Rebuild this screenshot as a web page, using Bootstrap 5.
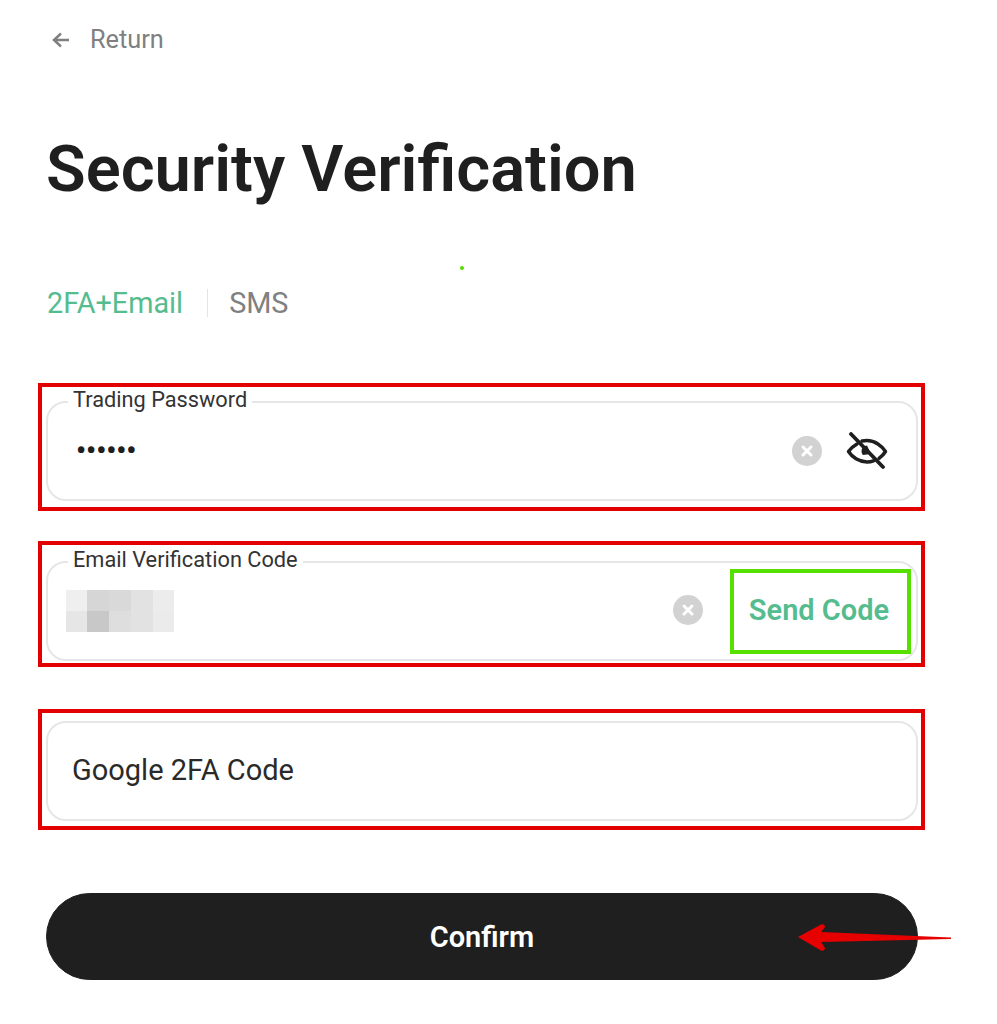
<!DOCTYPE html>
<html lang="en">

<head>
  <meta charset="UTF-8" />
  <meta name="viewport" content="width=device-width, initial-scale=1" />
  <title>Security Verification</title>
  <link href="https://cdn.jsdelivr.net/npm/bootstrap@5.3.3/dist/css/bootstrap.min.css" rel="stylesheet" />
  <style>
    body { font-family: Roboto, "Liberation Sans", sans-serif; color: #1f1f1f; background: #fff; }
    .page-wrap { position: relative; width: 872px; margin-left: 46px; height: 1024px; padding-top: 22px; }

    .back-row { height: 35px; color: #808080; font-size: 25.3px; line-height: 35px; }
    .back-row svg { margin-left: 5px; margin-right: 19px; }

    .page-title { font-size: 65px; line-height: 78px; font-weight: 600; margin: 73px 0 0; color: #1f1f1f; }

    .tab-row { margin-top: 75px; height: 40px; font-size: 28.8px; line-height: 40px; padding-left: 1px; }
    .tab-on { color: #55bc8f; }
    .tab-off { color: #808080; }
    .tab-sep { width: 1px; height: 28px; background: #e4e4e4; margin: 0 21px 0 24px; }

    .dot-mark { position: absolute; left: 414px; top: 266px; width: 4px; height: 4px; background: #56e000; }

    .red-frame { border: 4px solid #e30000; margin-left: -8px; width: 887px; padding: 14px 3px 6px 4px; }
    .frame-one { margin-top: 60px; height: 128px; }
    .frame-two { margin-top: 30px; height: 126px; padding-top: 16px; }
    .frame-three { margin-top: 42px; height: 121px; padding-top: 8px; }

    .code-field { position: relative; height: 100px; border: 2px solid #e6e6e6; border-radius: 20px; padding: 0 0 0 24px; }
    .field-label { position: absolute; left: 20px; top: -16px; padding: 0 5px; background: #fff; font-size: 21.75px; line-height: 26px; color: #333; }
    .dots-text { font-size: 28px; line-height: 1; font-weight: 700; padding-left: 4px; }
    .field-text { font-size: 29px; color: #2a2a2a; }
    .eye-btn { margin: 0 28px 0 24px; }
    .clear-raised { margin-bottom: 2px; }
    .pixel-patch { margin-left: 18px; }
    .send-box { border: 4px solid #56e000; width: 181px; height: 85px; margin: 0 5px 0 27px; padding-right: 3px; color: #55bc8f; font-size: 29px; font-weight: 600; }

    .confirm-btn { width: 872px; height: 87px; margin-top: 63px; padding-top: 8px; border-radius: 44px; background: #1f1f1f; border-color: #1f1f1f; color: #fff; font-size: 29px; font-weight: 600; }
    .confirm-btn:hover { background: #1f1f1f; color: #fff; }
    .red-arrow { position: absolute; left: 750px; top: 920px; }
  </style>
</head>

<body>

  <div class="page-wrap">
    <!-- Return link -->
    <div class="back-row d-flex align-items-center">
      <svg width="20" height="20" viewBox="0 0 20 20" fill="none" stroke="#808080" stroke-width="2.5">
        <path d="M18 10H3M10 3.5L3 10l7 6.5" />
      </svg>
      <span>Return</span>
    </div>

    <h1 class="page-title">Security Verification</h1>

    <!-- Method tabs -->
    <div class="tab-row d-flex align-items-center">
      <span class="tab-on">2FA+Email</span>
      <span class="tab-sep"></span>
      <span class="tab-off">SMS</span>
    </div>
    <div class="dot-mark rounded-circle"></div>

    <!-- Trading password -->
    <div class="red-frame frame-one">
      <div class="code-field d-flex align-items-center">
        <span class="field-label">Trading Password</span>
        <span class="dots-text flex-grow-1">••••••</span>
        <svg width="30" height="30" viewBox="0 0 30 30">
          <circle cx="15" cy="15" r="15" fill="#d2d2d2" />
          <path d="M11 11l8 8M19 11l-8 8" stroke="#fff" stroke-width="3" stroke-linecap="round" />
        </svg>
        <svg class="eye-btn" width="42" height="38" viewBox="0 0 42 38" fill="none" stroke="#1f1f1f" stroke-width="3.5" stroke-linecap="round" stroke-linejoin="round">
          <path d="M11 12C7.500 14 4.500 16.500 2.500 19.500 6 25 13 30 21 30c2.500 0 4.500-.4 6.500-1.200" />
          <path d="M16 9c1.800-.4 3.300-.5 5-.5 8 0 15 5.500 18.500 11-1.500 2.500-3.800 4.800-6.500 6.800" />
          <path d="M21 13.500a5.500 5.500 0 0 0-5.500 5.500c0 1.500.5 3 1.500 4l8-1" fill="#1f1f1f" stroke="none" />
          <path d="M5 2l32 33" stroke-width="3.800" />
        </svg>
      </div>
    </div>

    <!-- Email code -->
    <div class="red-frame frame-two">
      <div class="code-field d-flex align-items-center ps-0">
        <span class="field-label">Email Verification Code</span>
        <div class="flex-grow-1">
          <svg class="pixel-patch d-block" width="108" height="42" viewBox="0 0 108 42">
            <rect x="0" y="0" width="22" height="21" fill="#efefef" />
            <rect x="21" y="0" width="22" height="21" fill="#d6d6d6" />
            <rect x="43" y="0" width="22" height="21" fill="#d9d9d9" />
            <rect x="65" y="0" width="22" height="21" fill="#e2e2e2" />
            <rect x="87" y="0" width="21" height="21" fill="#ececec" />
            <rect x="0" y="21" width="22" height="21" fill="#e6e6e6" />
            <rect x="21" y="21" width="22" height="21" fill="#c8c8c8" />
            <rect x="43" y="21" width="22" height="21" fill="#dedede" />
            <rect x="65" y="21" width="22" height="21" fill="#e2e2e2" />
            <rect x="87" y="21" width="21" height="21" fill="#ebebeb" />
          </svg>
        </div>
        <svg class="clear-raised" width="30" height="30" viewBox="0 0 30 30">
          <circle cx="15" cy="15" r="15" fill="#d2d2d2" />
          <path d="M11 11l8 8M19 11l-8 8" stroke="#fff" stroke-width="3" stroke-linecap="round" />
        </svg>
        <div class="send-box d-flex align-items-center justify-content-center">Send Code</div>
      </div>
    </div>

    <!-- Google code -->
    <div class="red-frame frame-three">
      <div class="code-field d-flex align-items-center">
        <span class="field-text">Google 2FA Code</span>
      </div>
    </div>

    <button class="btn confirm-btn d-block" type="button">Confirm</button>

    <!-- Annotation arrow -->
    <svg class="red-arrow" width="158" height="36" viewBox="0 0 158 36">
      <path d="M2 17L25 4.500c2-1 4 .5 4 2.500L25 12 155 17.500v1.500L25 22l4 6c0 2-2 3.500-4 2.500z" fill="#e60000" />
    </svg>
  </div>

  <script src="https://cdn.jsdelivr.net/npm/bootstrap@5.3.3/dist/js/bootstrap.bundle.min.js"></script>
</body>

</html>
